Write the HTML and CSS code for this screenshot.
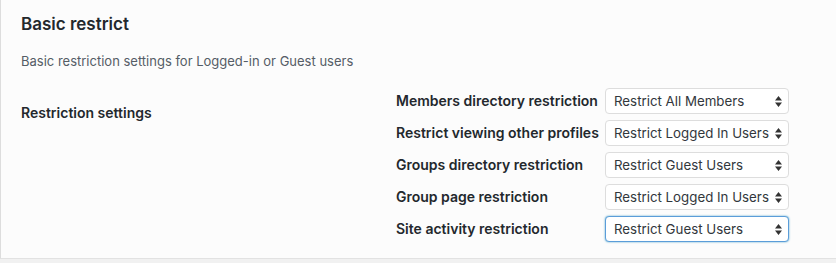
FILE: index.html
```html
<!DOCTYPE html>
<html lang="en">
<head>
    <meta charset="UTF-8">
    <meta name="viewport" content="width=device-width, initial-scale=1.0">
    <title>Basic restrict</title>
    <link rel="stylesheet" href="styles.css">
</head>
<body>
    <div class="panel">
        <h2 class="panel-title">Basic restrict</h2>
        <p class="panel-desc">Basic restriction settings for Logged-in or Guest users</p>

        <div class="settings">
            <div class="settings-label">Restriction settings</div>
            <div class="settings-rows">
                <label class="row-label" for="r-members">Members directory restriction</label>
                <div class="select-wrap">
                    <select id="r-members" class="select">
                        <option selected>Restrict All Members</option>
                        <option>Restrict Logged In Users</option>
                        <option>Restrict Guest Users</option>
                    </select>
                    <svg class="select-arrows" width="7" height="11" viewBox="0 0 7 11"><path d="M3.5 0 L7 4.5 H0 Z M3.5 11 L7 6.5 H0 Z" fill="#333"/></svg>
                </div>

                <label class="row-label" for="r-profiles">Restrict viewing other profiles</label>
                <div class="select-wrap">
                    <select id="r-profiles" class="select">
                        <option>Restrict All Members</option>
                        <option selected>Restrict Logged In Users</option>
                        <option>Restrict Guest Users</option>
                    </select>
                    <svg class="select-arrows" width="7" height="11" viewBox="0 0 7 11"><path d="M3.5 0 L7 4.5 H0 Z M3.5 11 L7 6.5 H0 Z" fill="#333"/></svg>
                </div>

                <label class="row-label" for="r-groups">Groups directory restriction</label>
                <div class="select-wrap">
                    <select id="r-groups" class="select">
                        <option>Restrict All Members</option>
                        <option>Restrict Logged In Users</option>
                        <option selected>Restrict Guest Users</option>
                    </select>
                    <svg class="select-arrows" width="7" height="11" viewBox="0 0 7 11"><path d="M3.5 0 L7 4.5 H0 Z M3.5 11 L7 6.5 H0 Z" fill="#333"/></svg>
                </div>

                <label class="row-label" for="r-group-page">Group page restriction</label>
                <div class="select-wrap">
                    <select id="r-group-page" class="select">
                        <option>Restrict All Members</option>
                        <option selected>Restrict Logged In Users</option>
                        <option>Restrict Guest Users</option>
                    </select>
                    <svg class="select-arrows" width="7" height="11" viewBox="0 0 7 11"><path d="M3.5 0 L7 4.5 H0 Z M3.5 11 L7 6.5 H0 Z" fill="#333"/></svg>
                </div>

                <label class="row-label" for="r-activity">Site activity restriction</label>
                <div class="select-wrap">
                    <select id="r-activity" class="select is-focused">
                        <option>Restrict All Members</option>
                        <option>Restrict Logged In Users</option>
                        <option selected>Restrict Guest Users</option>
                    </select>
                    <svg class="select-arrows" width="7" height="11" viewBox="0 0 7 11"><path d="M3.5 0 L7 4.5 H0 Z M3.5 11 L7 6.5 H0 Z" fill="#333"/></svg>
                </div>
            </div>
        </div>
    </div>
</body>
</html>
```

FILE: styles.css
```css
body {
    margin: 0;
    padding: 0;
    background: #f1f1f1;
    font-family: Inter, 'Liberation Sans', sans-serif;
    color: #23282d;
}

.panel {
    background: #fcfcfc;
    border-left: 1px solid #dddddd;
    border-bottom: 1px solid #e2e2e2;
    height: 259px;
    box-sizing: border-box;
    padding: 14px 20px 0 20px;
}

.panel-title {
    margin: 0;
    font-size: 17px;
    line-height: 20px;
    font-weight: 600;
    color: #23282d;
}

.panel-desc {
    margin: 17px 0 0 0;
    font-size: 13px;
    line-height: 20px;
    color: #555d66;
}

.settings {
    display: flex;
    margin-top: 17px;
}

.settings-label {
    width: 375px;
    padding-top: 15px;
    font-size: 14px;
    line-height: 20px;
    font-weight: 600;
}

.settings-rows {
    display: grid;
    grid-template-columns: 209px 184px;
    row-gap: 6px;
    align-items: center;
}

.row-label {
    font-size: 14px;
    font-weight: 600;
    line-height: 20px;
    white-space: nowrap;
}

.select-wrap {
    position: relative;
    height: 26px;
}

.select {
    appearance: none;
    -webkit-appearance: none;
    width: 184px;
    height: 26px;
    margin: 0;
    padding: 0 0 0 8px;
    border: 1px solid #dddddd;
    border-radius: 4px;
    background: #ffffff;
    font-family: inherit;
    font-size: 13.3px;
    color: #32373c;
    outline: none;
}

.select.is-focused {
    border-color: #5b9dd9;
    box-shadow: 0 0 2px rgba(30, 140, 190, 0.8);
}

/* stacked arrows drawn over the right end of the select */
.select-arrows {
    position: absolute;
    right: 7px;
    top: 8px;
    pointer-events: none;
}
```
